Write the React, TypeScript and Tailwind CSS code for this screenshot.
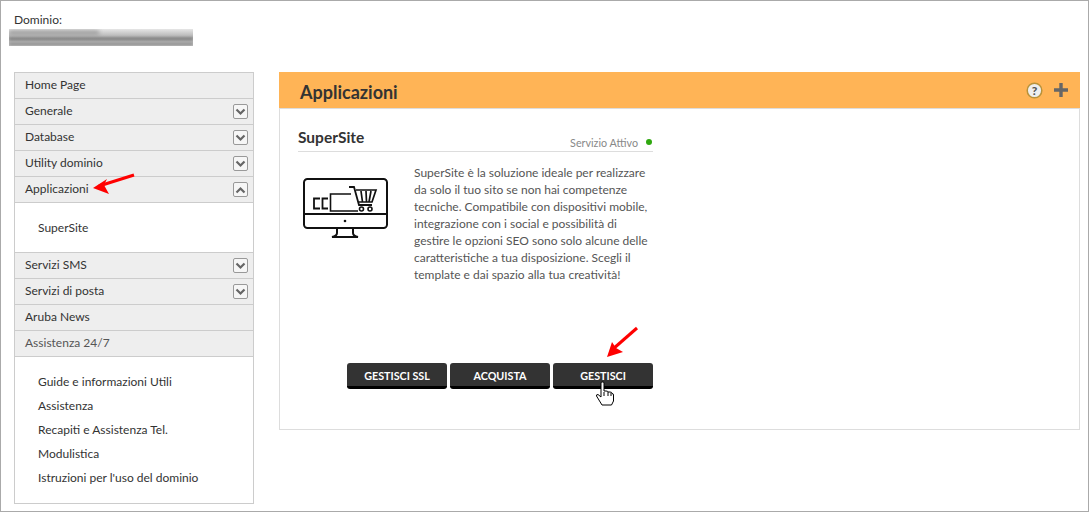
import type { ReactNode } from "react";

function Toggle({ up }: { up?: boolean }) {
  return (
    <span className="flex h-[15px] w-[15px] items-center justify-center rounded-[2px] border border-[#999] bg-[#f6f6f6]">
      <svg width="11" height="8" viewBox="0 0 11 8" className={up ? "rotate-180" : ""}>
        <path d="M1.5 1.5 L5.5 5.5 L9.5 1.5" fill="none" stroke="#666" strokeWidth="2.2" />
      </svg>
    </span>
  );
}

function MenuRow({ label, toggle, muted }: { label: string; toggle?: "up" | "down"; muted?: boolean }) {
  return (
    <div className={`flex h-[26px] items-center justify-between border-b border-[#ccc] bg-[#eee] pl-[10px] pr-[5px] ${muted ? "text-[#555]" : "text-[#333]"}`}>
      <span className="pb-[2px]">{label}</span>
      {toggle && <Toggle up={toggle === "up"} />}
    </div>
  );
}

function SubList({ children, className }: { children: ReactNode; className: string }) {
  return <div className={`flex flex-col border-b border-[#ccc] bg-white pl-[23px] text-[#333] ${className}`}>{children}</div>;
}

function DarkButton({ label }: { label: string }) {
  return (
    <button className="flex h-[26px] w-[100px] items-center justify-center rounded-[3px] border-b-[3px] border-black bg-[#333] pt-[3px] text-[10.75px] font-bold text-white">
      {label}
    </button>
  );
}

function RedArrow({ className, x1, y1, x2, y2, head }: { className: string; x1: number; y1: number; x2: number; y2: number; head: string }) {
  return (
    <svg className={`absolute ${className}`} width="50" height="40" viewBox="0 0 50 40">
      <line x1={x1} y1={y1} x2={x2} y2={y2} stroke="#f00" strokeWidth="3" />
      <polygon points={head} fill="#f00" />
    </svg>
  );
}

export default function App() {
  return (
    <div className="relative h-[512px] w-[1089px] overflow-hidden border border-[#aaa] bg-white text-[12px] font-['Lato','Liberation_Sans',sans-serif] leading-none">
      <div className="h-[71px] pl-[13px] pt-[13px] text-[#333]">
        <div>Dominio:</div>
        <div className="relative -ml-[5px] mt-[3px] h-[17px] w-[184px] overflow-hidden bg-gradient-to-b from-[#e6e6e6] via-[#b0b0b0] to-[#c8c8c8]">
          <div className="mt-[2px] h-[3px] w-[90px] bg-[#888] blur-[2px]" />
          <div className="mt-[4px] h-[2px] w-full bg-[#666] blur-[1.5px]" />
          <div className="mt-[3px] h-[2px] w-full bg-[#777] blur-[1.5px]" />
        </div>
      </div>

      <div className="flex items-start pl-[13px]">
        <aside className="h-[432px] w-[240px] border border-[#ccc]">
          <MenuRow label="Home Page" />
          <MenuRow label="Generale" toggle="down" />
          <MenuRow label="Database" toggle="down" />
          <MenuRow label="Utility dominio" toggle="down" />
          <MenuRow label="Applicazioni" toggle="up" />
          <SubList className="h-[50px] justify-center">
            <span>SuperSite</span>
          </SubList>
          <MenuRow label="Servizi SMS" toggle="down" />
          <MenuRow label="Servizi di posta" toggle="down" />
          <MenuRow label="Aruba News" />
          <MenuRow label="Assistenza 24/7" muted />
          <div className="flex flex-col gap-[12px] bg-white pl-[23px] pt-[19px] text-[#333]">
            <span>Guide e informazioni Utili</span>
            <span>Assistenza</span>
            <span>Recapiti e Assistenza Tel.</span>
            <span>Modulistica</span>
            <span>Istruzioni per l'uso del dominio</span>
          </div>
        </aside>

        <main className="ml-[25px] h-[358px] w-[801px] border-b border-r border-l border-[#ddd]">
          <header className="-mx-px flex h-[37px] items-center justify-between border-b border-[#ddd] bg-[#ffb456] pl-[21px] pr-[11px]">
            <h1 className="pt-[3px] text-[18px] font-bold text-[#333]">Applicazioni</h1>
            <div className="flex items-center gap-[10px]">
              <svg width="17" height="17" viewBox="0 0 17 17">
                <circle cx="8.5" cy="8.5" r="7.3" fill="#eee" stroke="#b8923a" strokeWidth="1.5" />
                <text x="8.5" y="12.8" textAnchor="middle" fontSize="12" fontWeight="900" fill="#555">?</text>
              </svg>
              <svg width="16" height="16" viewBox="0 0 16 16">
                <path d="M8 1 V15 M1 8 H15" stroke="#666" strokeWidth="3.4" />
              </svg>
            </div>
          </header>

          <section className="w-[373px] pl-[18px] pt-[21px]">
            <div className="flex h-[22px] items-start justify-between border-b border-[#ddd]">
              <h2 className="text-[15.5px] font-bold text-[#333]">SuperSite</h2>
              <div className="mt-[8px] flex items-center gap-[8px] pr-[1px] text-[10.75px] text-[#888]">
                <span>Servizio Attivo</span>
                <span className="mb-[2px] h-[6px] w-[6px] rounded-full bg-[#2fa80f]" />
              </div>
            </div>

            <div className="flex pt-[12px]">
              <svg className="ml-[5px] mt-[14px] shrink-0" width="86" height="62" viewBox="0 0 86 62" fill="none" stroke="#111">
                <rect x="1" y="1" width="83" height="49" rx="3.5" strokeWidth="2" />
                <path d="M1 36 H84" strokeWidth="2" />
                <circle cx="42" cy="43" r="1.3" fill="#111" stroke="none" />
                <path d="M34 50 V55 Q34 58 29 59 H55 Q50 58 50 55 V50" strokeWidth="2" />
                <path d="M17 20.5 H11 V30.5 H17 M25 20.5 H19.5 V30.5 H25" strokeWidth="1.8" />
                <path d="M48 16 H27.5 V33 H55" strokeWidth="1.6" />
                <path d="M46 9 H51 L56 27 H69" strokeWidth="1.8" />
                <path d="M53 12 H73 L69 24 H56 M58 13 L59.5 24 M63 13 L63.5 24 M68 13 L66 24" strokeWidth="1.7" />
                <circle cx="58.5" cy="31" r="2" strokeWidth="1.6" />
                <circle cx="67" cy="31" r="2" strokeWidth="1.6" />
              </svg>
              <p className="ml-[25px] w-[240px] leading-[17px] text-[#555]">
                SuperSite è la soluzione ideale per realizzare da solo il tuo sito se non hai competenze tecniche. Compatibile con dispositivi mobile, integrazione con i social e possibilità di gestire le opzioni SEO sono solo alcune delle caratteristiche a tua disposizione. Scegli il template e dai spazio alla tua creatività!
              </p>
            </div>

            <div className="mt-[80px] flex justify-end gap-[3px]">
              <DarkButton label="GESTISCI SSL" />
              <DarkButton label="ACQUISTA" />
              <DarkButton label="GESTISCI" />
            </div>
          </section>
        </main>
      </div>

      <RedArrow className="left-[90px] top-[169px]" x1={43} y1={5} x2={8} y2={16} head="2,18 16,9 13,15 18,24" />
      <RedArrow className="left-[600px] top-[324px]" x1={36} y1={3} x2={12} y2={24} head="6,32 11,17 15,23 22,27" />

      <svg className="absolute left-[594px] top-[380px]" width="20" height="26" viewBox="0 0 20 26">
        <path d="M6 2 Q6 1 7.5 1 Q9 1 9 2 V10 H11 Q13 10 13 11 H15 Q17 11 17 12.5 Q18.5 12.5 18.5 14 V20 L16.5 24 H7 L1.5 15 Q1 13.5 3 13.5 L6 16 Z" fill="#fff" stroke="#000" strokeWidth="1" />
        <path d="M9 11 V15 M13 11 V15 M16 12 V15" stroke="#000" strokeWidth="1" />
      </svg>
    </div>
  );
}
